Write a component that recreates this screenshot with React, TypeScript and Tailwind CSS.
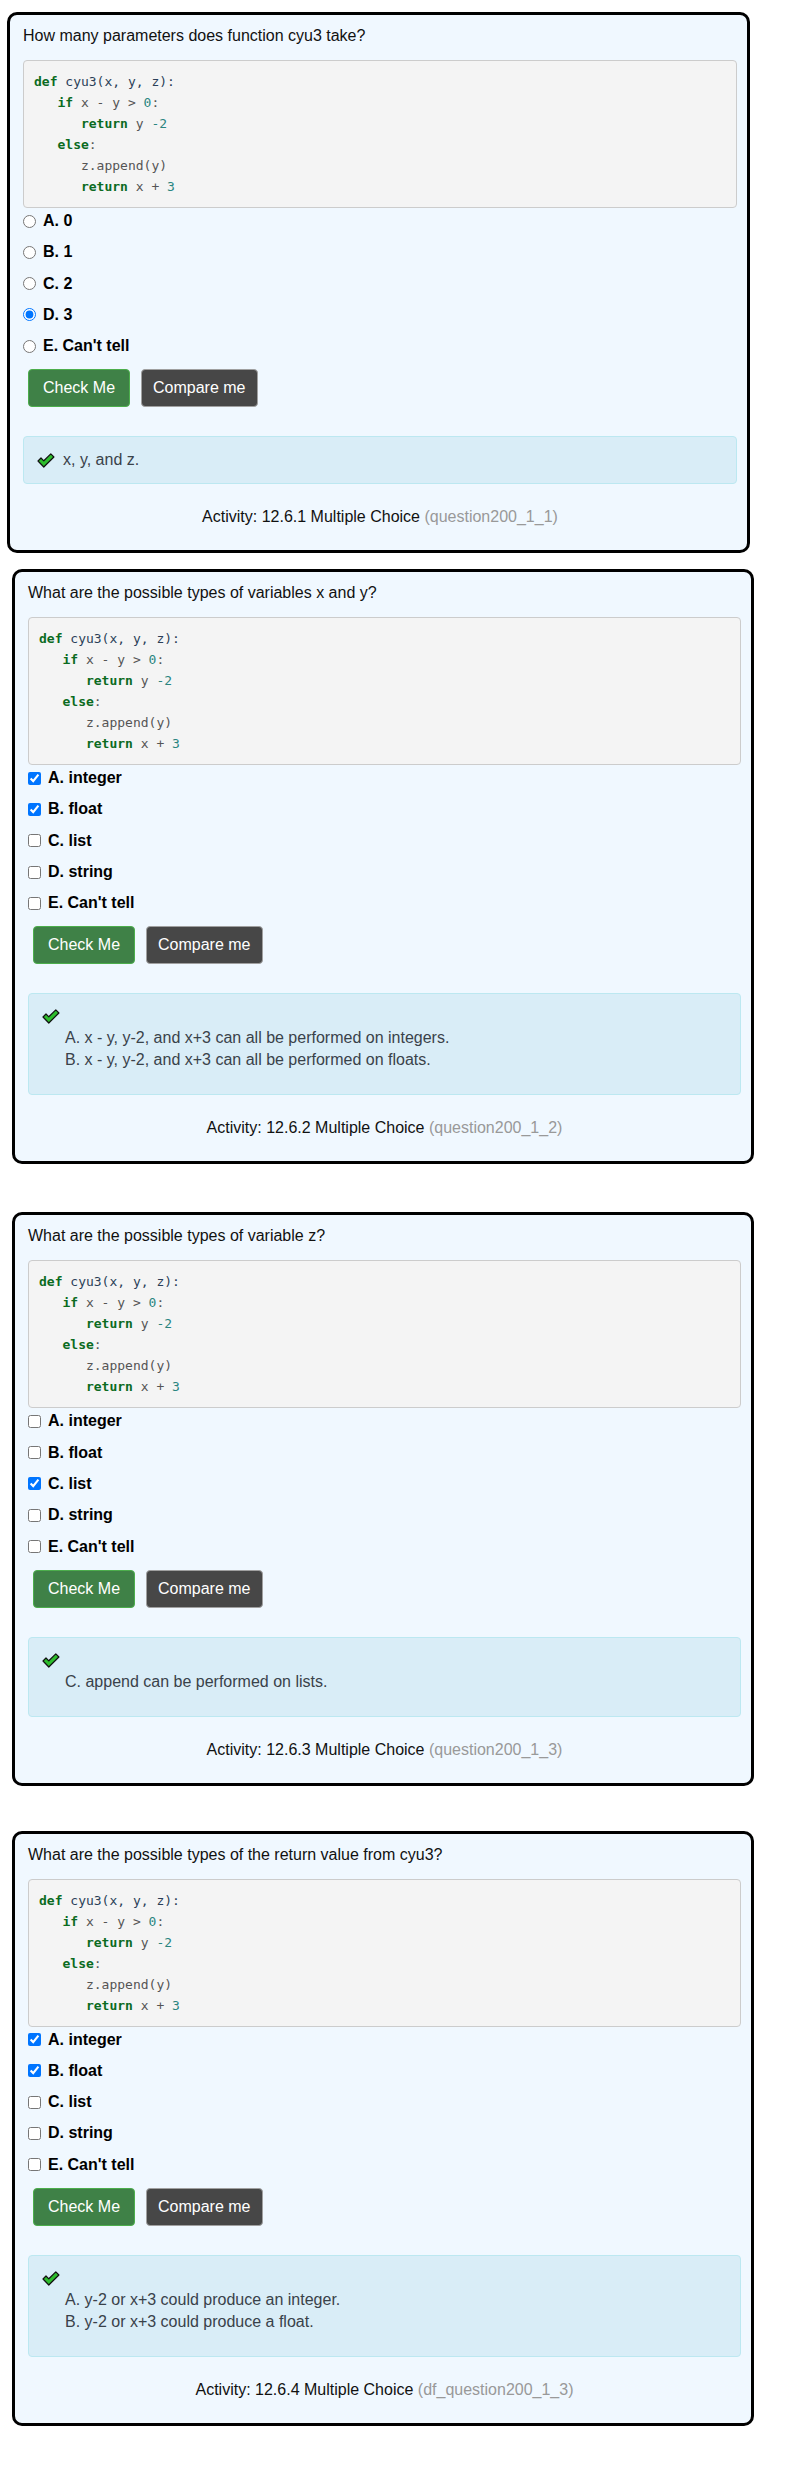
import React from 'react';

// Runestone-style "check your understanding" multiple choice cards.

type Question = {
  prompt: string;
  kind: 'radio' | 'checkbox';
  options: string[];
  picked: number[];
  feedback: string[];
  inline?: boolean;
  activity: string;
  id: string;
  outer: string;
};

const questions: Question[] = [
  {
    prompt: 'How many parameters does function cyu3 take?',
    kind: 'radio',
    options: ['A. 0', 'B. 1', 'C. 2', 'D. 3', "E. Can't tell"],
    picked: [3],
    feedback: ['x, y, and z.'],
    inline: true,
    activity: 'Activity: 12.6.1 Multiple Choice',
    id: '(question200_1_1)',
    outer: 'mt-[12px] ml-[7px] w-[743px]',
  },
  {
    prompt: 'What are the possible types of variables x and y?',
    kind: 'checkbox',
    options: ['A. integer', 'B. float', 'C. list', 'D. string', "E. Can't tell"],
    picked: [0, 1],
    feedback: [
      'A. x - y, y-2, and x+3 can all be performed on integers.',
      'B. x - y, y-2, and x+3 can all be performed on floats.',
    ],
    activity: 'Activity: 12.6.2 Multiple Choice',
    id: '(question200_1_2)',
    outer: 'mt-[16px] ml-[12px] w-[742px]',
  },
  {
    prompt: 'What are the possible types of variable z?',
    kind: 'checkbox',
    options: ['A. integer', 'B. float', 'C. list', 'D. string', "E. Can't tell"],
    picked: [2],
    feedback: ['C. append can be performed on lists.'],
    activity: 'Activity: 12.6.3 Multiple Choice',
    id: '(question200_1_3)',
    outer: 'mt-[48px] ml-[12px] w-[742px]',
  },
  {
    prompt: 'What are the possible types of the return value from cyu3?',
    kind: 'checkbox',
    options: ['A. integer', 'B. float', 'C. list', 'D. string', "E. Can't tell"],
    picked: [0, 1],
    feedback: ['A. y-2 or x+3 could produce an integer.', 'B. y-2 or x+3 could produce a float.'],
    activity: 'Activity: 12.6.4 Multiple Choice',
    id: '(df_question200_1_3)',
    outer: 'mt-[45px] ml-[12px] w-[742px]',
  },
];

const Kw = ({ children }: { children: React.ReactNode }) => (
  <span className="font-bold text-[#0b6b1f]">{children}</span>
);
const Num = ({ children }: { children: React.ReactNode }) => (
  <span className="text-[#2a8580]">{children}</span>
);

const CodeBlock = () => (
  <pre className="mt-[13px] bg-[#f4f4f4] border border-[#cccccc] rounded-[4px] px-[10px] py-[10px] font-['DejaVu_Sans_Mono',monospace] text-[13px] leading-[21px] text-[#555]">
    <div>
      <Kw>def</Kw>
      <span className="text-[#2b3f58]"> cyu3(x, y, z):</span>
    </div>
    <div>
      {'   '}
      <Kw>if</Kw> x - y &gt; <Num>0</Num>:
    </div>
    <div>
      {'      '}
      <Kw>return</Kw> y <Num>-2</Num>
    </div>
    <div>
      {'   '}
      <Kw>else</Kw>:
    </div>
    <div>{'      '}z.append(y)</div>
    <div>
      {'      '}
      <Kw>return</Kw> x + <Num>3</Num>
    </div>
  </pre>
);

const Check = () => (
  <svg width="18" height="15" viewBox="0 0 18 15" className="shrink-0">
    <path
      d="M1 8 L4 5 L6.8 7.8 L13.8 0.9 L16.9 4 L6.8 14 Z"
      fill="#2dbd2d"
      stroke="#111"
      strokeWidth="1.2"
      strokeLinejoin="round"
    />
  </svg>
);

const Card = ({ q }: { q: Question }) => (
  <div
    className={`${q.outer} border-[3px] border-black rounded-[10px] bg-[#f0f8ff] pt-[10px] pb-[22px] pl-[13px] pr-[10px]`}
  >
    <p className="leading-[22px] text-[#111]">{q.prompt}</p>
    <CodeBlock />
    <div className="mt-[2px] flex flex-col gap-[9.3px]">
      {q.options.map((opt, i) => (
        <label key={opt} className="flex items-center gap-[7px] h-[22px]">
          <input
            type={q.kind}
            name={q.id}
            defaultChecked={q.picked.includes(i)}
            className="w-[13px] h-[13px]"
          />
          <span className="font-bold text-black">{opt}</span>
        </label>
      ))}
    </div>
    <div className="mt-[12px] ml-[5px] flex gap-[11px]">
      <button className="h-[38px] px-[14px] rounded-[4px] bg-[#3f8147] border border-[#4cae4c] text-white">
        Check Me
      </button>
      <button className="h-[38px] px-[11px] rounded-[4px] bg-[#474747] border border-[#a0a0a0] text-white">
        Compare me
      </button>
    </div>
    <div className="mt-[29px] bg-[#d9edf7] border border-[#bce8f1] rounded-[4px] px-[13px] py-[12px] text-[#39424a] leading-[22px]">
      {q.inline ? (
        <div className="flex items-center gap-[8px]">
          <Check />
          <span>{q.feedback[0]}</span>
        </div>
      ) : (
        <div>
          <div className="h-[21px] flex items-center">
            <Check />
          </div>
          <div className="pl-[23px] mb-[11px]">
            {q.feedback.map((f) => (
              <div key={f}>{f}</div>
            ))}
          </div>
        </div>
      )}
    </div>
    <p className="mt-[22px] leading-[22px] text-center text-[#111]">
      {q.activity} <span className="text-[#999]">{q.id}</span>
    </p>
  </div>
);

export default function App() {
  return (
    <div className="w-[796px] min-h-[2481px] bg-white font-['Liberation_Sans',Arial,sans-serif] text-[16px] flow-root">
      {questions.map((q) => (
        <Card key={q.id} q={q} />
      ))}
    </div>
  );
}
